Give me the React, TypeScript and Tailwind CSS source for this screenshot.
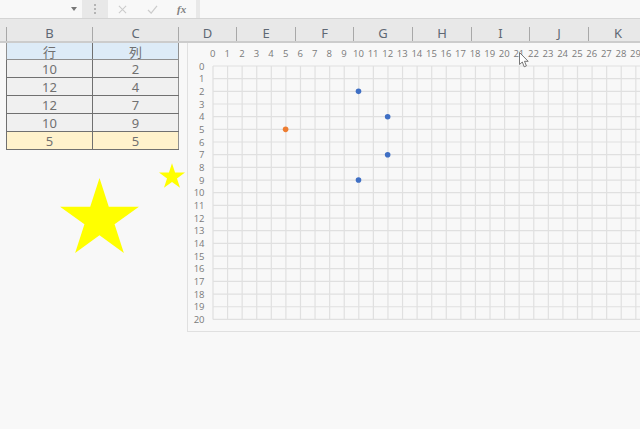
import React from 'react'

const columns = [
  { label: '', width: 'w-[7px]' },
  { label: 'B', width: 'w-[86px]' },
  { label: 'C', width: 'w-[86px]' },
  { label: 'D', width: 'w-[58px]' },
  { label: 'E', width: 'w-[59px]' },
  { label: 'F', width: 'w-[58px]' },
  { label: 'G', width: 'w-[59px]' },
  { label: 'H', width: 'w-[59px]' },
  { label: 'I', width: 'w-[58px]' },
  { label: 'J', width: 'w-[59px]' },
  { label: 'K', width: 'w-[59px]' },
]

const rows = [
  { row: '10', col: '2' },
  { row: '12', col: '4' },
  { row: '12', col: '7' },
  { row: '10', col: '9' },
]

const GRID_X = 212
const GRID_Y = 66
const STEP_X = 14.58
const STEP_Y = 12.67
const GRID_BOTTOM = GRID_Y + STEP_Y * 20

const points = [
  { x: 10, y: 2, color: '#3f6fc4' },
  { x: 12, y: 4, color: '#3f6fc4' },
  { x: 12, y: 7, color: '#3f6fc4' },
  { x: 10, y: 9, color: '#3f6fc4' },
  { x: 5, y: 5, color: '#ed7d31' },
]

const range = (n: number) => Array.from({ length: n }, (_, i) => i)

const ScatterGrid = () => (
  <svg viewBox="187 43 453 288" className="block w-[453px] h-[288px]">
    {range(31).map(i => (
      <line
        key={`v${i}`}
        x1={GRID_X + i * STEP_X}
        x2={GRID_X + i * STEP_X}
        y1={GRID_Y}
        y2={GRID_BOTTOM}
        stroke="#e0e0e0"
        strokeWidth="1.2"
      />
    ))}
    {range(21).map(i => (
      <line
        key={`h${i}`}
        x1={GRID_X}
        x2={640}
        y1={GRID_Y + i * STEP_Y}
        y2={GRID_Y + i * STEP_Y}
        stroke="#e0e0e0"
        strokeWidth="1.2"
      />
    ))}
    {range(30).map(i => (
      <text
        key={`tx${i}`}
        x={GRID_X + i * STEP_X - 0.3}
        y={56.5}
        textAnchor="middle"
        fontSize="9.5"
        fill="#7a7a7a"
        fontFamily="'Open Sans', sans-serif"
      >
        {i}
      </text>
    ))}
    {range(21).map(i => (
      <text
        key={`ty${i}`}
        x={203.5}
        y={GRID_Y + i * STEP_Y + 3.5}
        textAnchor="end"
        fontSize="9.5"
        fill="#7a7a7a"
        fontFamily="'Open Sans', sans-serif"
      >
        {i}
      </text>
    ))}
    {points.map(p => (
      <circle
        key={`${p.x}-${p.y}`}
        cx={GRID_X + p.x * STEP_X - 0.3}
        cy={GRID_Y + p.y * STEP_Y}
        r="2.8"
        fill={p.color}
      />
    ))}
  </svg>
)

const Star = ({ className }: { className: string }) => (
  <svg viewBox="0 0 100 95.1" className={className}>
    <polygon points="50,0 61.8,36.3 100,36.3 69.1,58.8 80.9,95.1 50,72.7 19.1,95.1 30.9,58.8 0,36.3 38.2,36.3" fill="#ffff00" />
  </svg>
)

export default function App() {
  return (
    <div className="relative w-[640px] h-[429px] overflow-hidden bg-[#f8f8f8] font-['Noto_Sans','Noto_Sans_CJK_JP',sans-serif] text-[#707070]">
      {/* 数式バー */}
      <div className="flex h-[19px] bg-[#e8e8e8] border-b border-[#d4d4d4]">
        <div className="w-[82px] bg-[#f8f8f8] flex items-center justify-end pr-[5px]">
          <div className="w-0 h-0 border-x-[3px] border-x-transparent border-t-[4px] border-t-[#777777]" />
        </div>
        <div className="w-[26px] flex flex-col items-center justify-center gap-[2px]">
          <div className="w-[2px] h-[2px] bg-[#b4b4b4]" />
          <div className="w-[2px] h-[2px] bg-[#b4b4b4]" />
          <div className="w-[2px] h-[2px] bg-[#b4b4b4]" />
        </div>
        <div className="w-[88px] bg-[#f8f8f8] flex items-center">
          <svg viewBox="0 0 10 10" className="w-[9px] h-[9px] ml-[10px]">
            <path d="M1 1L9 9M9 1L1 9" stroke="#cccccc" strokeWidth="1.2" fill="none" />
          </svg>
          <svg viewBox="0 0 12 10" className="w-[11px] h-[9px] ml-[20px]">
            <path d="M1 5.5L4.5 9L11 1" stroke="#cccccc" strokeWidth="1.4" fill="none" />
          </svg>
          <span className="ml-[19px] font-['Liberation_Serif',serif] italic font-bold text-[11px] leading-none text-[#808080]">
            fx
          </span>
        </div>
        <div className="w-[4px]" />
        <div className="flex-1 bg-[#f8f8f8]" />
      </div>

      {/* 列ヘッダー */}
      <div className="flex h-[24px] bg-[#e8e8e8] border-b-2 border-[#cccccc]">
        {columns.map(c => (
          <div key={c.label || 'A'} className={`${c.width} shrink-0 flex items-end`}>
            <span className="flex-1 text-center text-[13px] leading-[16px] text-[#5f6874]">{c.label}</span>
            <span className="w-px h-[14px] bg-[#a8a8a8]" />
          </div>
        ))}
      </div>

      <div className="flex">
        {/* 表 */}
        <div className="w-[187px] shrink-0 pl-[6px] pr-[8px] text-[13px]">
          <div className="flex h-[17px] bg-[#ddebf7] border-l border-b border-[#909090] leading-[18px]">
            <div className="w-[86px] text-center border-r border-[#707070]">行</div>
            <div className="w-[86px] text-center border-r border-[#909090]">列</div>
          </div>
          {rows.map((r, i) => (
            <div key={i} className="flex h-[18px] bg-[#f0f0f0] border-l border-b border-[#707070] leading-[19px]">
              <div className="w-[86px] text-center border-r border-[#707070]">{r.row}</div>
              <div className="w-[86px] text-center border-r border-[#909090]">{r.col}</div>
            </div>
          ))}
          <div className="flex h-[18px] bg-[#fff2cc] border-l border-b border-[#707070] leading-[19px]">
            <div className="w-[86px] text-center border-r border-[#707070]">5</div>
            <div className="w-[86px] text-center border-r border-[#909090]">5</div>
          </div>
        </div>

        {/* グラフ */}
        <div className="flex-1 h-[289px] border-l border-b border-[#e0e0e0]">
          <ScatterGrid />
        </div>
      </div>

      {/* 図形 */}
      <Star className="absolute left-[60px] top-[178px] w-[79px] h-[75px]" />
      <Star className="absolute left-[159px] top-[163px] w-[26px] h-[25px]" />

      {/* マウスカーソル */}
      <svg viewBox="0 0 11 16" className="absolute left-[519px] top-[52px] w-[11px] h-[16px]">
        <path d="M0.5 0.5V12.5L3.3 10L5.2 14.8L7.4 13.9L5.5 9.3H9.2Z" fill="#ffffff" stroke="#666666" strokeWidth="0.9" />
      </svg>
    </div>
  )
}
